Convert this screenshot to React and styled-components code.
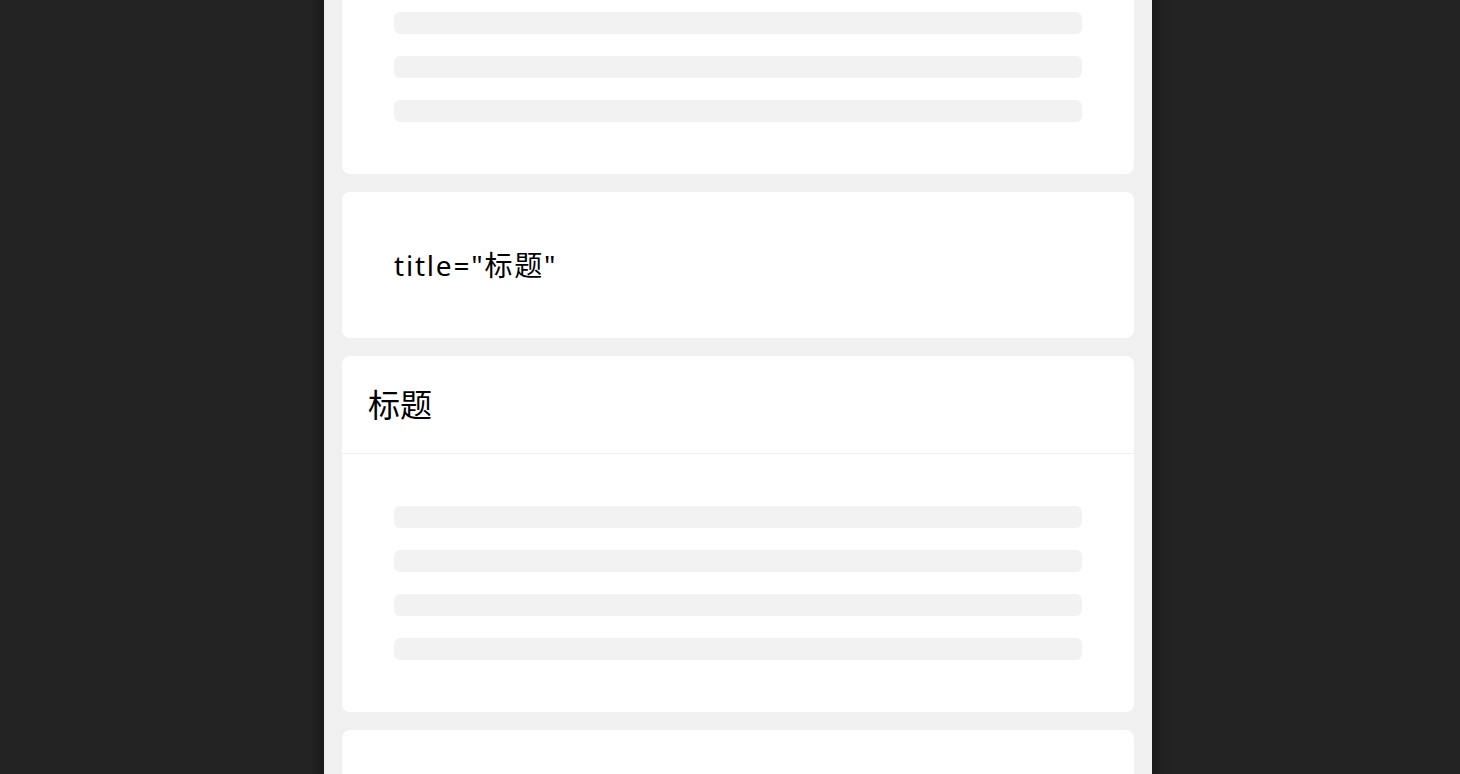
import React from "react";
import styled, { createGlobalStyle } from "styled-components";

const GlobalStyle = createGlobalStyle`
  html, body {
    margin: 0;
    padding: 0;
    background: #232323;
    overflow: hidden;
  }
  body {
    font-family: "Noto Sans", "Noto Sans CJK SC", sans-serif;
  }
`;

const Page = styled.div`
  display: flex;
  justify-content: center;
  align-items: flex-start;
  padding-left: 16px;
  height: 100vh;
  overflow: hidden;
`;

const Phone = styled.div`
  width: 828px;
  flex-shrink: 0;
  margin-top: -200px;
  min-height: calc(100vh + 400px);
  background: #f0f0f0;
  box-shadow: 0 0 16px rgba(0, 0, 0, 0.45);
  padding: 18px;
  box-sizing: border-box;
  display: flex;
  flex-direction: column;
  gap: 18px;
`;

const Card = styled.div`
  flex-shrink: 0;
  background: #fff;
  border-radius: 8px;
  overflow: hidden;
`;

const Header = styled.div`
  height: 98px;
  display: flex;
  align-items: center;
  padding: 0 26px 3px;
  box-sizing: border-box;
  border-bottom: 1px solid #f0f0f0;
  font-size: 32px;
  color: #000;
`;

const Body = styled.div`
  padding: 52px;
  display: flex;
  flex-direction: column;
  gap: 22px;
`;

const Bar = styled.div`
  height: 22px;
  border-radius: 6px;
  background: #f2f2f2;
`;

const Text = styled.div`
  font-size: 28px;
  line-height: 42px;
  letter-spacing: 1.8px;
  color: #000;
`;

const Skeleton = ({ rows = 4 }) => (
  <Body>
    {Array.from({ length: rows }).map((_, i) => (
      <Bar key={i} />
    ))}
  </Body>
);

export default function App() {
  return (
    <>
      <GlobalStyle />
      <Page>
        <Phone>
          <Card>
            <Header>标题</Header>
            <Skeleton />
          </Card>
          <Card>
            <Body>
              <Text>title="标题"</Text>
            </Body>
          </Card>
          <Card>
            <Header>标题</Header>
            <Skeleton />
          </Card>
          <Card>
            <Body>
              <Text>title="标题"</Text>
            </Body>
          </Card>
        </Phone>
      </Page>
    </>
  );
}
